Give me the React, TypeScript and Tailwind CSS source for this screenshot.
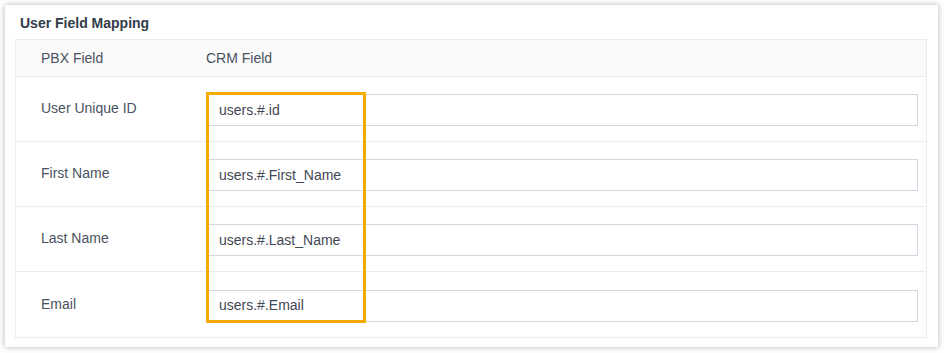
import React from 'react'

const rows = [
  { label: 'User Unique ID', value: 'users.#.id' },
  { label: 'First Name', value: 'users.#.First_Name' },
  { label: 'Last Name', value: 'users.#.Last_Name' },
  { label: 'Email', value: 'users.#.Email' },
]

export default function App() {
  return (
    <div className="w-[944px] h-[353px] bg-white pt-[5px] pl-[5px] font-['Liberation_Sans',Arial,sans-serif]">
      <div className="relative w-[933px] h-[342px] bg-white shadow-[0_0_6px_rgba(0,0,0,0.3)]">
        {/* Title */}
        <div className="h-[34px] flex items-center pl-[15px] pt-[2px] text-[14px] font-bold text-[#333b48]">
          User Field Mapping
        </div>

        {/* Table */}
        <div className="mx-[10px] mr-[11px] border border-[#ebebf0]">
          <div className="h-[37px] flex items-center bg-[#fafafa] border-b border-[#ebebf0] text-[14px] text-[#4a5260]">
            <div className="w-[190px] pl-[25px]">PBX Field</div>
            <div>CRM Field</div>
          </div>
          {rows.map((r, i) => (
            <div
              key={r.label}
              className={
                'h-[65px] flex items-center text-[14px] text-[#4a5260] ' +
                (i < rows.length - 1 ? 'border-b border-[#ebebf0]' : '')
              }
            >
              <div className="w-[190px] pl-[25px] pb-[1px]">{r.label}</div>
              <div className="flex-1 pr-[8px] pt-[2px]">
                <div className="h-[32px] flex items-center px-[12px] border border-[#d8d5e2] bg-white text-[14px] text-[#3f4754]">
                  {r.value}
                </div>
              </div>
            </div>
          ))}
        </div>

        {/* Highlight annotation */}
        <div className="absolute left-[201px] top-[87px] w-[160px] h-[231px] border-[3px] border-[#f6ab00]" />
      </div>
    </div>
  )
}
